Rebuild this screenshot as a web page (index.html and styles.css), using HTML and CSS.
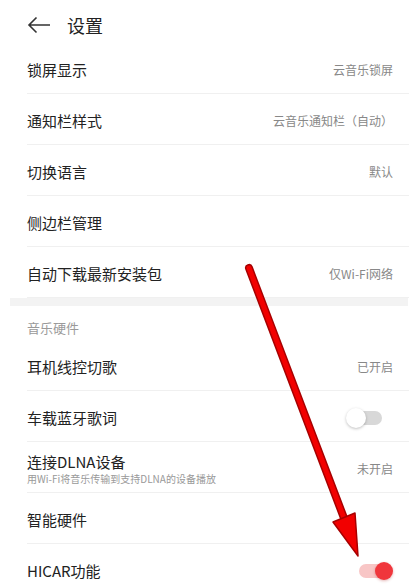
FILE: index.html
```html
<!DOCTYPE html>
<html lang="zh-CN">
  <head>
    <meta charset="UTF-8" />
    <meta name="viewport" content="width=device-width, initial-scale=1.0" />
    <title>设置</title>
    <link rel="stylesheet" href="styles.css">
  </head>
  <body>
    <div class="page">
      <div class="header">
        <svg class="back" width="24" height="18" viewBox="0 0 24 18">
          <path d="M23 9H2M9.5 1.5L2 9l7.5 7.5" fill="none" stroke="#333" stroke-width="1.6" />
        </svg>
        <span class="title">设置</span>
      </div>

      <div class="list">
        <div class="row">
          <span class="label">锁屏显示</span>
          <span class="value">云音乐锁屏</span>
        </div>
        <div class="row">
          <span class="label">通知栏样式</span>
          <span class="value">云音乐通知栏（自动）</span>
        </div>
        <div class="row">
          <span class="label">切换语言</span>
          <span class="value">默认</span>
        </div>
        <div class="row">
          <span class="label">侧边栏管理</span>
        </div>
        <div class="row">
          <span class="label">自动下载最新安装包</span>
          <span class="value">仅Wi-Fi网络</span>
        </div>
      </div>

      <div class="band"></div>

      <div class="section-title">音乐硬件</div>

      <div class="list">
        <div class="row">
          <span class="label">耳机线控切歌</span>
          <span class="value">已开启</span>
        </div>
        <div class="row">
          <span class="label">车载蓝牙歌词</span>
          <div class="switch"><span class="knob"></span></div>
        </div>
        <div class="row">
          <div class="label-box">
            <span class="label">连接DLNA设备</span>
            <span class="sub">用Wi-Fi将音乐传输到支持DLNA的设备播放</span>
          </div>
          <span class="value">未开启</span>
        </div>
        <div class="row">
          <span class="label">智能硬件</span>
        </div>
        <div class="row">
          <span class="label">HICAR功能</span>
          <div class="switch on"><span class="knob"></span></div>
        </div>
      </div>

      <!-- red arrow drawn over the screenshot -->
      <svg class="arrow" width="412" height="586" viewBox="0 0 412 586">
        <line x1="249" y1="268" x2="347" y2="526" stroke="#a80000" stroke-width="8" stroke-linecap="round" />
        <line x1="249" y1="268" x2="347" y2="526" stroke="#f20000" stroke-width="5" stroke-linecap="round" />
        <polygon points="358,556 333,522 355,513" fill="#f20000" stroke="#a80000" stroke-width="1.5" stroke-linejoin="round" />
      </svg>
    </div>
  </body>
</html>
```

FILE: styles.css
```css
* {
  margin: 0;
  padding: 0;
  box-sizing: border-box;
}

body {
  background: #fff;
  font-family: "Noto Sans CJK SC", "Noto Sans", sans-serif;
  color: #222;
}

.page {
  position: relative;
  width: 412px;
  height: 586px;
  overflow: hidden;
}

.header {
  display: flex;
  align-items: center;
  height: 43px;
  padding-top: 7px;
  padding-left: 27px;
  gap: 16px;
}

.header .title {
  font-size: 18px;
  line-height: 22px;
  color: #222;
}

.list {
  margin-left: 27px;
  margin-right: 3px;
}

.row {
  display: flex;
  justify-content: space-between;
  align-items: center;
  height: 51px;
  padding-top: 4px;
  padding-right: 16px;
  border-bottom: 1px solid #f0f0f0;
}

.list:first-of-type .row:last-child {
  height: 50px;
  border-bottom: none;
}

.label {
  font-size: 15px;
  line-height: 20px;
  color: #222;
}

.label-box {
  display: flex;
  flex-direction: column;
}

.sub {
  font-size: 10px;
  line-height: 14px;
  color: #999;
  white-space: nowrap;
}

.value {
  font-size: 12px;
  line-height: 16px;
  color: #888;
}

.band {
  height: 8px;
  margin: 0 4px 0 10px;
  background: #f3f3f3;
}

.section-title {
  height: 34px;
  padding-top: 14px;
  padding-left: 27px;
  font-size: 13px;
  line-height: 16px;
  color: #9a9a9a;
}

.switch {
  position: relative;
  width: 32px;
  height: 14px;
  margin-right: 11px;
  border-radius: 7px;
  background: #d8d8d8;
}

.switch .knob {
  position: absolute;
  left: -4px;
  top: -3px;
  width: 20px;
  height: 20px;
  border-radius: 50%;
  background: #fff;
  box-shadow: 0 1px 3px rgba(0, 0, 0, 0.25);
}

.switch.on {
  width: 30px;
  margin-right: 4px;
  background: #f8c6c6;
}

.switch.on .knob {
  left: auto;
  right: -4px;
  top: -2px;
  width: 18px;
  height: 18px;
  background: #f0363c;
  box-shadow: 0 1px 3px rgba(160, 0, 0, 0.3);
}

.arrow {
  position: absolute;
  left: 0;
  top: 0;
  pointer-events: none;
}
```
